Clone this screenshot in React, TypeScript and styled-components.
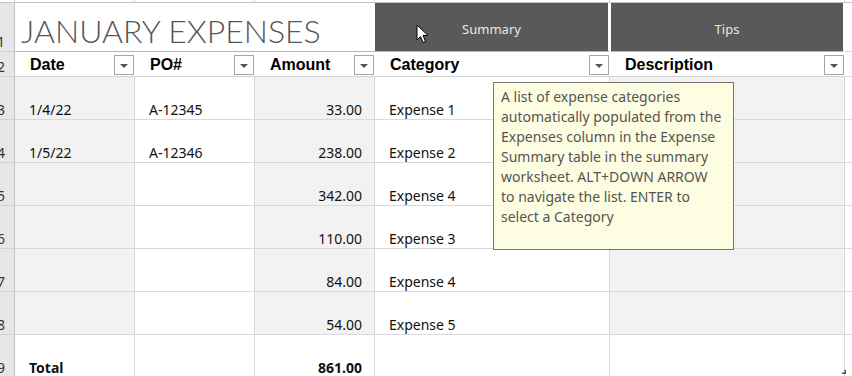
import styled, { createGlobalStyle } from "styled-components";

const GlobalStyle = createGlobalStyle`
  html, body {
    margin: 0;
    padding: 0;
    background: #ffffff;
    overflow: hidden;
  }
  body {
    font-family: "Noto Sans", "Open Sans", sans-serif;
  }
`

const Sheet = styled.div`
  position: relative;
  display: grid;
  grid-template-columns: 15px 120px 120px 120px 235px 235px 1fr;
  grid-template-rows: 3px 49px 25px repeat(7, 43px);
  width: 852px;
  height: 376px;
  overflow: hidden;
`

const Cell = styled.div<{ $bg?: string; $align?: "left" | "right"; $bold?: boolean }>`
  box-sizing: border-box;
  display: flex;
  align-items: flex-end;
  justify-content: ${p => (p.$align === "right" ? "flex-end" : "flex-start")};
  padding: 0 12px 0 14px;
  background: ${p => p.$bg || "#ffffff"};
  border-right: 1px solid #d9d9d9;
  border-bottom: 1px solid #d9d9d9;
  font-size: 14px;
  line-height: 19px;
  font-weight: ${p => (p.$bold ? 700 : 400)};
  color: #111111;
  white-space: nowrap;
  overflow: hidden;
`

const TopStrip = styled.div`
  box-sizing: border-box;
  background: #ffffff;
  border-right: 1px solid #d9d9d9;
  border-bottom: 1px solid #c4c4c4;
`

const RowHead = styled.div`
  box-sizing: border-box;
  display: flex;
  align-items: flex-end;
  justify-content: flex-end;
  padding: 0 9px 0 0;
  background: #e6e6e6;
  border-right: 1px solid #c2c2c2;
  border-bottom: 1px solid #d2d2d2;
  font-size: 14px;
  line-height: 19px;
  color: #333333;
  overflow: hidden;
  white-space: nowrap;
`

const TitleCell = styled.div`
  grid-column: 2 / 5;
  box-sizing: border-box;
  display: flex;
  align-items: flex-end;
  padding: 0 0 1px 6px;
  border-bottom: 1px solid #b4b4b4;
  font-family: "Lato", "DejaVu Sans", sans-serif;
  font-weight: 300;
  font-size: 32px;
  color: #555555;
  white-space: nowrap;
`

const BandCell = styled.div<{ $gap?: boolean }>`
  box-sizing: border-box;
  display: flex;
  align-items: center;
  justify-content: center;
  padding-top: 3px;
  margin-left: ${p => (p.$gap ? "1px" : "0")};
  background: #595959;
  border-right: 2px solid #ffffff;
  border-bottom: 1px solid #b4b4b4;
  color: #e8e8e8;
  font-size: 13px;
`

const HeaderCell = styled.div`
  box-sizing: border-box;
  display: flex;
  align-items: center;
  justify-content: space-between;
  padding: 2px 1px 0 15px;
  border-bottom: 1px solid #d2d2d2;
  font-family: "Liberation Sans", Arial, sans-serif;
  font-weight: 700;
  font-size: 16px;
  color: #000000;
`

const FilterButton = styled.div`
  box-sizing: border-box;
  width: 20px;
  height: 20px;
  display: flex;
  align-items: center;
  justify-content: center;
  background: #ffffff;
  border: 1px solid #a6a6a6;
`

const Arrow = styled.div`
  width: 0;
  height: 0;
  border-left: 4px solid transparent;
  border-right: 4px solid transparent;
  border-top: 4px solid #555555;
  margin-top: 1px;
`

const Tooltip = styled.div`
  position: absolute;
  left: 493px;
  top: 82px;
  box-sizing: border-box;
  width: 241px;
  height: 168px;
  padding: 4px 7px;
  background: #fdfde2;
  border: 1px solid #767676;
  font-size: 14px;
  line-height: 20px;
  color: #555555;
`

const TipLine = styled.div`
  white-space: nowrap;
`

const Pointer = styled.svg`
  position: absolute;
  left: 416px;
  top: 24px;
`

const Handle = styled.svg`
  position: absolute;
  left: 840px;
  top: 368px;
`

type Row = { n: string; date: string; po: string; amount: string; cat: string }

const rows: Row[] = [
  { n: "3", date: "1/4/22", po: "A-12345", amount: "33.00", cat: "Expense 1" },
  { n: "4", date: "1/5/22", po: "A-12346", amount: "238.00", cat: "Expense 2" },
  { n: "5", date: "", po: "", amount: "342.00", cat: "Expense 4" },
  { n: "6", date: "", po: "", amount: "110.00", cat: "Expense 3" },
  { n: "7", date: "", po: "", amount: "84.00", cat: "Expense 4" },
  { n: "8", date: "", po: "", amount: "54.00", cat: "Expense 5" },
]

const headers = ["Date", "PO#", "Amount", "Category", "Description"]

const tipLines = [
  "A list of expense categories",
  "automatically populated from the",
  "Expenses column in the Expense",
  "Summary table in the summary",
  "worksheet. ALT+DOWN ARROW",
  "to navigate the list. ENTER to",
  "select a Category",
]

const BAND = "#f2f2f2"

const App = () => {
  return (
    <>
      <GlobalStyle />
      <Sheet>
        {Array.from({ length: 7 }).map((_, i) => (
          <TopStrip key={`t${i}`} />
        ))}

        <RowHead>1</RowHead>
        <TitleCell>JANUARY EXPENSES</TitleCell>
        <BandCell>Summary</BandCell>
        <BandCell $gap>Tips</BandCell>
        <Cell />

        <RowHead>2</RowHead>
        {headers.map(h => (
          <HeaderCell key={h}>
            <span>{h}</span>
            <FilterButton>
              <Arrow />
            </FilterButton>
          </HeaderCell>
        ))}
        <Cell />

        {rows.map(r => (
          <>
            <RowHead key={`h${r.n}`}>{r.n}</RowHead>
            <Cell $bg={BAND}>{r.date}</Cell>
            <Cell>{r.po}</Cell>
            <Cell $bg={BAND} $align="right">{r.amount}</Cell>
            <Cell>{r.cat}</Cell>
            <Cell $bg={BAND} />
            <Cell />
          </>
        ))}

        <RowHead>9</RowHead>
        <Cell $bold>Total</Cell>
        <Cell />
        <Cell $bold $align="right">861.00</Cell>
        <Cell />
        <Cell />
        <Cell />

        <Tooltip>
          {tipLines.map(l => (
            <TipLine key={l}>{l}</TipLine>
          ))}
        </Tooltip>

        <Pointer width="14" height="21" viewBox="0 0 14 21">
          <path
            d="M1 1 L1 16 L4.5 12.5 L7 18.5 L9.5 17.5 L7 11.5 L12 11.5 Z"
            fill="#ffffff"
            stroke="#000000"
            strokeWidth="1"
            strokeLinejoin="round"
          />
        </Pointer>

        <Handle width="8" height="8" viewBox="0 0 8 8">
          <path d="M6 2 L6 6 L2 6 L2 4.5 L4.5 4.5 L4.5 2 Z" fill="#44546a" />
        </Handle>
      </Sheet>
    </>
  )
}

export default App;
